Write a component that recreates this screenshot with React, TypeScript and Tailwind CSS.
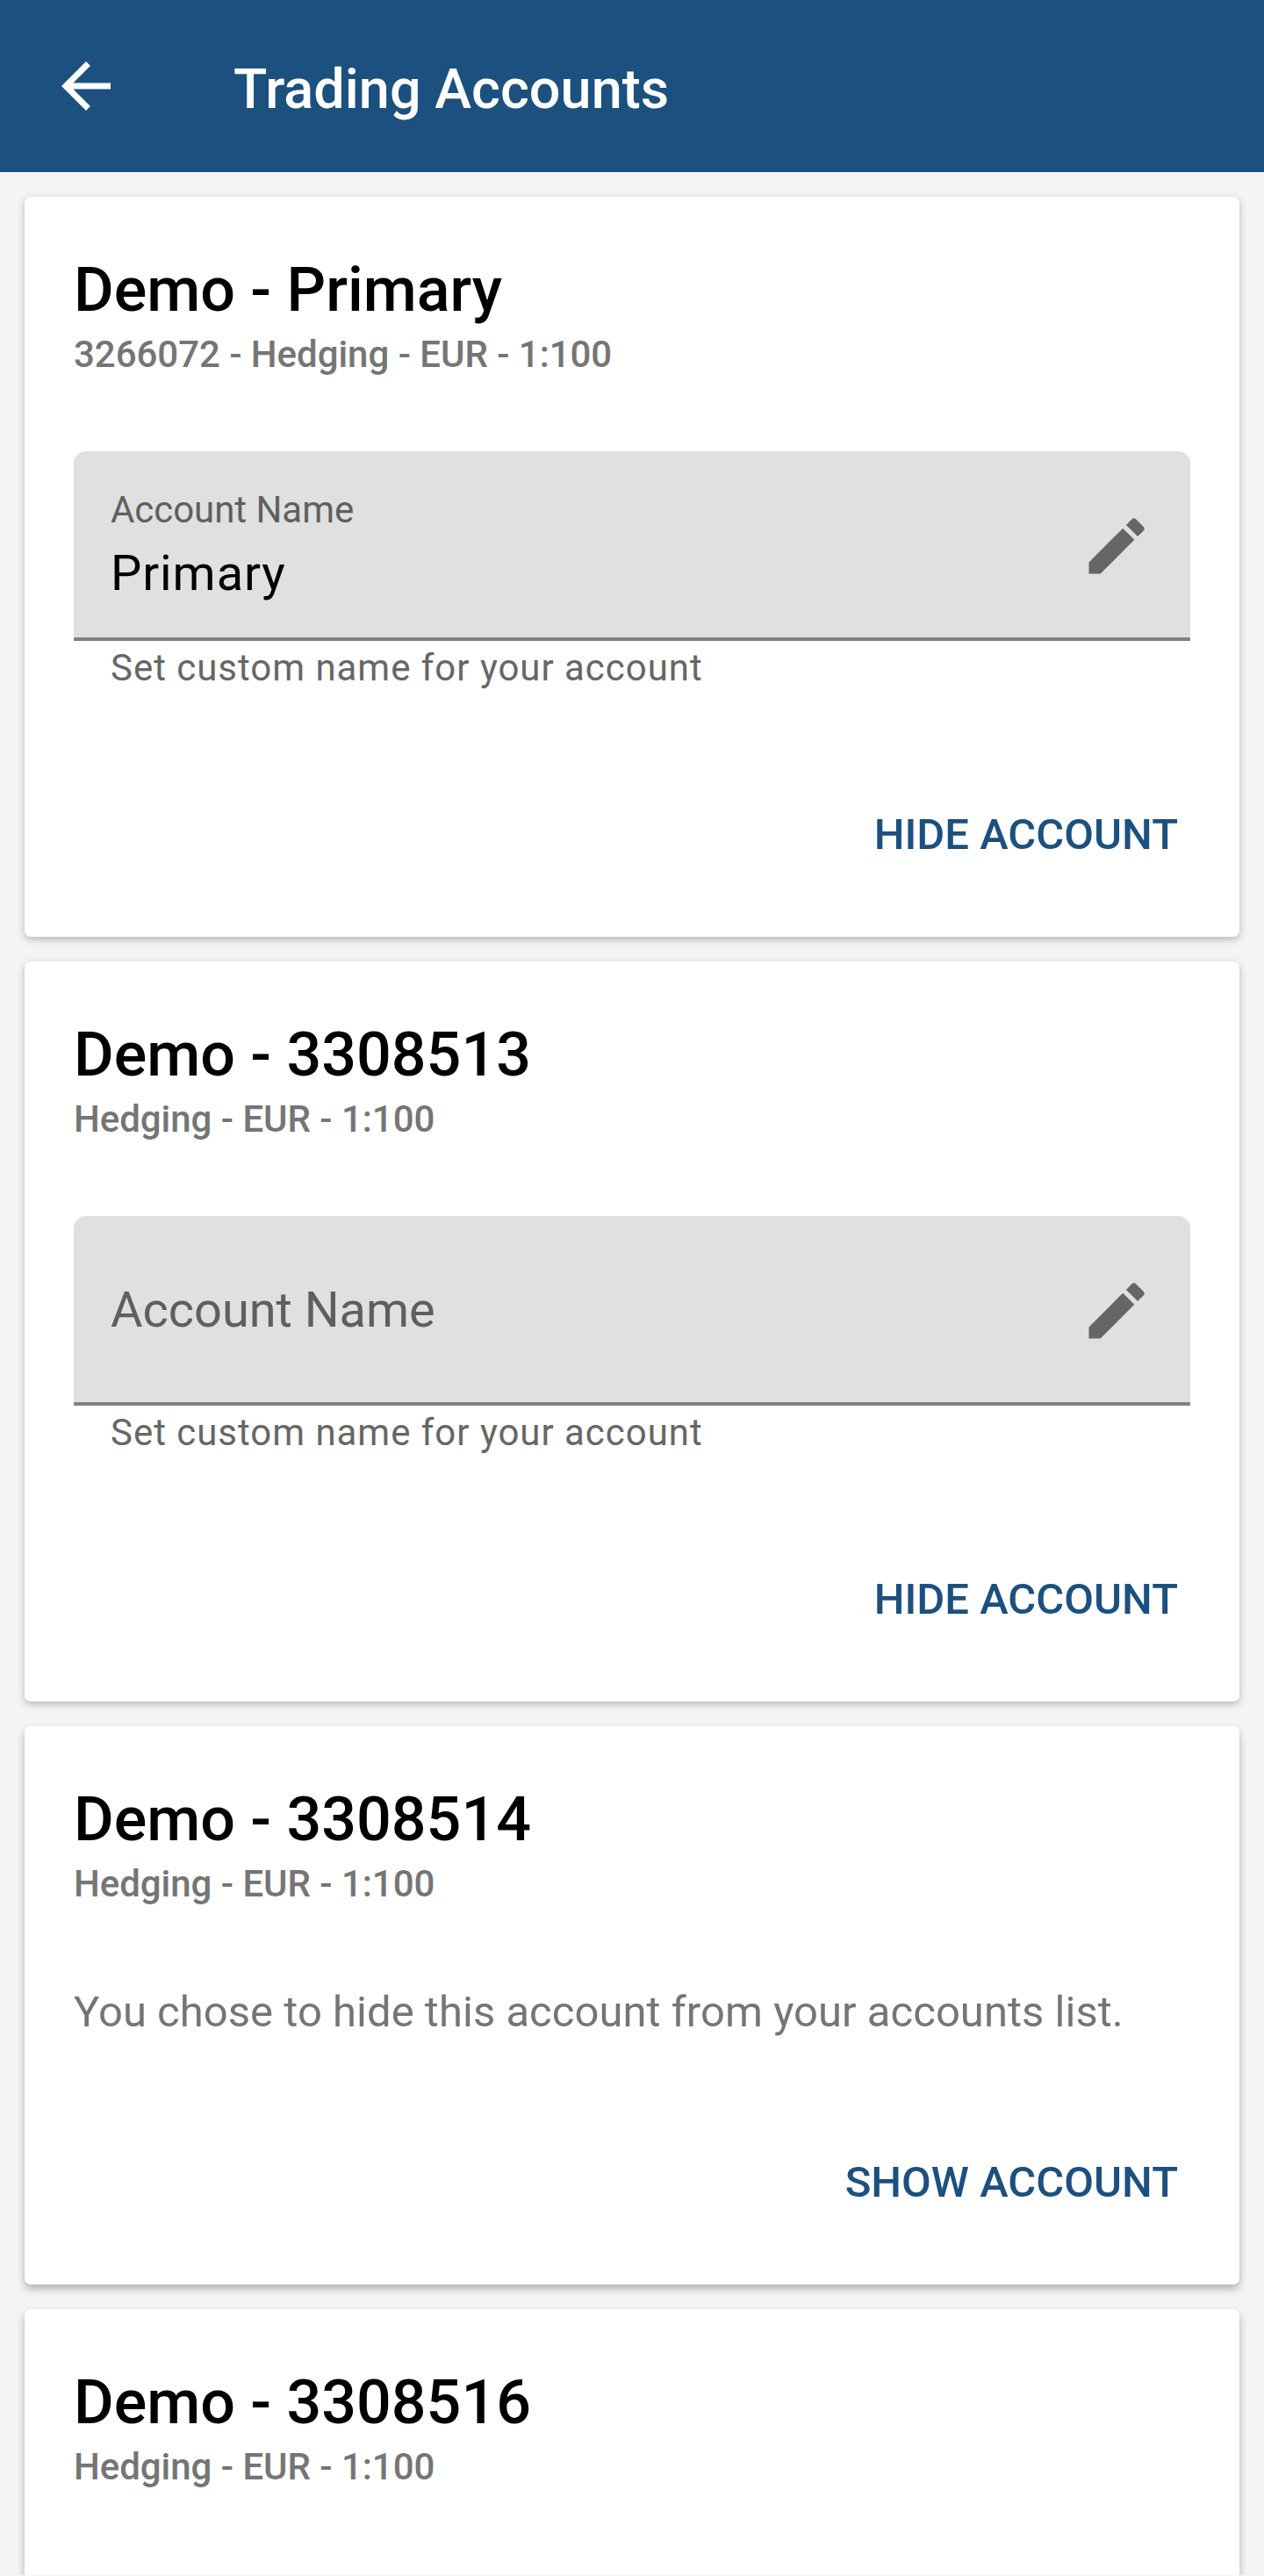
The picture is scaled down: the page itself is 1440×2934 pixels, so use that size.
import React from 'react';

interface Account {
  title: string;
  details: string;
  name?: string;
  status?: 'shown' | 'hidden';
}

const accounts: Account[] = [
  { title: 'Demo - Primary', details: '3266072 - Hedging - EUR - 1:100', name: 'Primary', status: 'shown' },
  { title: 'Demo - 3308513', details: 'Hedging - EUR - 1:100', status: 'shown' },
  { title: 'Demo - 3308514', details: 'Hedging - EUR - 1:100', status: 'hidden' },
  { title: 'Demo - 3308516', details: 'Hedging - EUR - 1:100' },
];

function NameField({ name }: { name?: string }) {
  return (
    <div className="mt-[83px]">
      <div className="flex h-[216px] items-center justify-between rounded-t-[14px] bg-[#e0e0e0] px-[42px] shadow-[inset_0_-4px_0_#808080]">
        {name ? (
          <div className="pb-[2px]">
            <div className="text-[42px] leading-[55px] tracking-[-0.05px] text-[#5f5f5f]">Account Name</div>
            <div className="mt-[9px] text-[56px] leading-[72px] tracking-[0.9px] text-black">{name}</div>
          </div>
        ) : (
          <div className="pb-[2px] text-[56px] leading-[72px] tracking-[-0.05px] text-[#5f5f5f]">Account Name</div>
        )}
        <svg viewBox="0 0 24 24" className="h-[84px] w-[84px] fill-[#666666]">
          <path d="M3 17.25V21h3.75L17.81 9.94l-3.75-3.75L3 17.25zM20.71 7.04a1 1 0 0 0 0-1.41l-2.34-2.34a1 1 0 0 0-1.41 0l-1.83 1.83 3.75 3.75 1.83-1.83z" />
        </svg>
      </div>
      <p className="pl-[42px] pt-[3px] text-[42px] leading-[55px] tracking-[0.97px] text-[#666666]">
        Set custom name for your account
      </p>
    </div>
  );
}

function AccountCard({ account }: { account: Account }) {
  return (
    <section
      className={`flex shrink-0 flex-col rounded-[7px] bg-white px-[56px] pt-[62px] ${
        account.status === 'shown'
          ? 'h-[843px] shadow-[0_3px_9px_rgba(0,0,0,0.26)]'
          : 'h-[636px] shadow-[0_5px_10px_rgba(0,0,0,0.28)]'
      }`}
    >
      <h2 className="text-[70px] font-medium leading-[88px] text-black">{account.title}</h2>
      <p className="mt-[2px] text-[42px] font-medium leading-[55px] tracking-[-0.04px] text-[#757575]">{account.details}</p>
      {account.status === 'shown' && <NameField name={account.name} />}
      {account.status === 'hidden' && (
        <p className="mt-[87px] text-[49px] leading-[63px] tracking-[0.03px] text-[#757575]">
          You chose to hide this account from your accounts list.
        </p>
      )}
      {account.status && (
        <button className="mb-[85px] mr-[14px] mt-auto self-end text-[49px] font-medium leading-[63px] text-[#1b507f]">
          {account.status === 'hidden' ? 'SHOW ACCOUNT' : 'HIDE ACCOUNT'}
        </button>
      )}
    </section>
  );
}

export default function App() {
  return (
    <div className="h-[2934px] w-[1440px] overflow-hidden bg-[#f4f4f4] font-['Roboto',sans-serif]">
      <header className="flex h-[196px] items-center bg-[#1b507f] pl-[56px] text-white">
        <svg viewBox="0 0 24 24" className="h-[84px] w-[84px] fill-white">
          <path d="M20 11H7.83l5.59-5.59L12 4l-8 8 8 8 1.41-1.41L7.83 13H20v-2z" />
        </svg>
        <h1 className="ml-[126px] mt-[7px] text-[63px] font-medium leading-[73px]">Trading Accounts</h1>
      </header>
      <main className="flex h-[2737px] flex-col gap-[28px] overflow-hidden px-[28px] pt-[28px]">
        {accounts.map((account) => (
          <AccountCard key={account.title} account={account} />
        ))}
      </main>
    </div>
  );
}
